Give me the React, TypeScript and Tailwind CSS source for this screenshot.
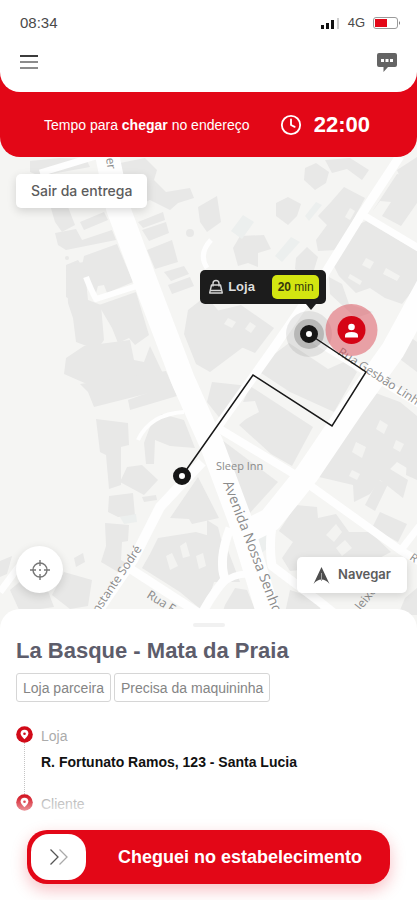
import { Clock } from "lucide-react";

const BUILDINGS = [
  "30,161 60,158 86,159 90,167 40,176 30,172",
  "120,163 145,158 157,170 154,180 166,192 190,188 194,198 178,203 170,210 150,200 135,206 126,190",
  "50,205 68,207 75,225 62,232 55,222",
  "80,222 104,212 108,220 84,230",
  "55,233 76,229 82,240 112,230 116,240 66,250 58,245",
  "138,222 163,212 165,220 143,228",
  "142,230 166,222 169,233 149,241",
  "147,250 172,240 178,262 155,269",
  "164,272 184,266 189,274 171,281",
  "168,285 190,277 194,286 172,294",
  "66,265 78,260 82,266 84,256 117,244 133,282 107,293 104,285 98,286 96,293 90,293 84,276 77,274 72,300 66,297",
  "66,265 84,262 88,300 101,305 104,340 97,350 76,342 73,318 68,303",
  "99,305 136,292 149,335 135,345 129,338 118,343 112,328 102,311",
  "66,358 84,346 130,340 134,360 144,362 150,346 166,380 96,388 64,374",
  "188,310 206,296 222,315 240,325 246,345 210,372 196,364 184,334",
  "198,207 217,196 221,222 207,232 200,222",
  "80,384 166,371 173,387 94,407 88,392",
  "128,400 172,384 177,396 130,410",
  "96,419 128,423 129,445 121,447 121,485 109,489 106,455 100,452",
  "162,414 184,420 195,448 170,446 155,440 154,464 146,464 144,443 151,424",
  "127,467 142,465 158,480 144,495 120,482",
  "109,496 133,493 135,516 118,517 108,512",
  "142,497 156,495 157,500 144,502",
  "105,523 129,525 128,541 122,542 121,560 126,563 118,572 101,562 106,546",
  "198,477 219,518 192,524 189,519 170,518",
  "158,538 196,532 224,540 240,582 214,582 204,612 180,592 142,568 150,554",
  "74,558 83,553 85,562 76,567",
  "64,572 92,580 88,606 70,609 52,595",
  "0,561 12,556 7,574 0,577",
  "10,590 28,575 46,586 54,607 20,612",
  "305,168 316,163 329,172 326,183 315,190 304,180",
  "276,203 288,197 301,204 297,216 288,225 276,216",
  "331,202 344,187 365,198 337,250 318,251 316,240 327,225 318,216",
  "233,248 240,236 264,235 271,249 258,253 258,267 248,263 238,266",
  "296,258 307,247 318,257 314,270 304,276 295,269",
  "325,160 350,158 369,170 362,180 347,169 332,173",
  "372,212 380,201 391,202 382,216 401,226 417,203 417,177 397,174",
  "397,170 417,157 417,193 405,190",
  "355,226 366,221 417,251 417,285 402,304 385,298 370,288 356,293 345,282 339,276 334,266 339,251",
  "329,277 342,284 349,304 373,312 356,318 330,294",
  "388,350 402,331 417,342 417,372",
  "212,312 241,305 274,328 255,353 234,344 222,334",
  "264,362 289,343 328,369 346,361 357,372 334,412 290,392 255,369",
  "212,382 249,386 238,405 222,421 207,402",
  "250,386 313,427 292,466 271,454 239,425 246,419 259,412 255,401 243,402",
  "222,440 278,482 249,514 241,507",
  "373,392 400,402 417,416 417,474 397,462 390,469 408,480 403,498 380,480 370,494 354,502 353,485 319,477 331,458",
  "378,480 388,484 375,511 365,505",
  "380,512 407,524 398,542 372,528",
  "407,458 417,462 417,480 406,475",
  "296,505 317,507 318,518 336,514 349,532 370,532 391,552 370,563 330,567 290,571 282,558 293,542 279,531",
  "207,520 218,527 222,543 219,560 207,569",
  "225,605 235,588 247,590 257,614 222,614",
  "290,590 320,600 320,615 285,613",
  "405,598 417,588 417,615 398,615",
];

const COURTYARDS = [
  "356,442 366,447 362,458 352,452",
  "380,420 388,425 384,434 376,429",
  "352,470 360,474 357,480 349,476",
  "396,440 404,444 400,452 393,448",
  "366,258 374,262 370,269 362,265",
  "386,268 400,276 397,281 383,274",
  "350,274 362,281 360,285 348,278",
  "350,208 355,211 350,220 345,217",
  "228,318 236,322 232,328 224,324",
  "250,322 256,326 251,333 245,329",
  "326,535 336,524 342,532 334,542",
  "345,540 352,548 342,556 336,548",
  "180,546 186,542 190,556 183,558",
  "196,556 203,553 206,566 199,569",
  "166,556 172,553 178,566 170,570",
];

const WATER = [
  "231,231 243,215 254,222 242,239",
  "275,256 291,237 300,242 282,262",
  "305,216 316,202 322,205 309,221",
  "120,517 136,514 137,522 124,524",
  "236,530 268,516 268,548 250,562",
];

const ROADS = [
  { d: "M102 130L118 208L146 283L183 380L212 445L240 520L272 625", w: 24 },
  { d: "M430 282L393 350L353 406L307 474L270 520L244 533", w: 24 },
  { d: "M202 462L160 507L133 560L92 620", w: 10 },
  { d: "M126 566L200 614", w: 9 },
  { d: "M400 156L360 217L324 275L273 349L204 446", w: 9 },
  { d: "M360 213L425 252", w: 7 },
  { d: "M218 428L294 474L400 550L425 565", w: 8 },
  { d: "M314 340L366 372L425 408", w: 7 },
  { d: "M140 285L96 299Q91 290 86 277", w: 6 },
  { d: "M138 440Q150 414 184 412", w: 4 },
  { d: "M0 592L20 565", w: 7 },
  { d: "M230 528Q218 560 225 579Q208 600 200 618", w: 9 },
  { d: "M222 584Q232 574 248 574", w: 7 },
  { d: "M278 500Q267 535 272 566L320 602L345 622", w: 9 },
  { d: "M428 515L401 550", w: 7 },
  { d: "M40 173L96 156", w: 7 },
  { d: "M207 268Q198 254 211 240", w: 5 },
];

function CityMap() {
  return (
    <svg
      className="absolute inset-0 h-full w-full"
      viewBox="0 137 417 492"
      preserveAspectRatio="xMidYMid slice"
      aria-hidden="true"
    >
      <rect y="137" width="417" height="492" fill="#f5f5f3" />
      <g fill="#e8e8e7">
        {BUILDINGS.map((points) => (
          <polygon key={points} points={points} />
        ))}
        <circle cx="190" cy="233" r="4" />
        <circle cx="67" cy="258" r="2" />
      </g>
      <g fill="#f3f3f1">
        {COURTYARDS.map((points) => (
          <polygon key={points} points={points} />
        ))}
      </g>
      <g fill="#ecefee">
        {WATER.map((points) => (
          <polygon key={points} points={points} />
        ))}
      </g>
      <g fill="none" stroke="#fefefe" strokeLinejoin="round">
        {ROADS.map((road) => (
          <path key={road.d} d={road.d} strokeWidth={road.w} />
        ))}
      </g>

      <g className="font-['Open_Sans',sans-serif]" fill="#8b8b8b" fontSize="12">
        <text x="216" y="470" fontSize="11">Sleep Inn</text>
        <text transform="translate(223 483) rotate(69)" fontSize="14">
          Avenida Nossa Senhora
        </text>
        <text transform="translate(90 626) rotate(-56)">Constante Sodré</text>
        <text transform="translate(146 597) rotate(32)">Rua F</text>
        <text transform="translate(337 354) rotate(33)">Rua Gesbão Linh</text>
        <text transform="translate(105 151) rotate(82)">Per</text>
        <text transform="translate(361 611) rotate(-52)">leixo</text>
        <text transform="translate(409 559) rotate(35)" fontSize="11">R</text>
      </g>

      <circle cx="309" cy="334" r="23" fill="#000" fillOpacity="0.08" />
      <circle cx="309" cy="334" r="15" fill="#000" fillOpacity="0.18" />
      <path
        d="M182 476L253 375L332 426L366 372L309 334"
        fill="none"
        stroke="#181818"
        strokeWidth="1.5"
      />
      <circle cx="309" cy="334" r="6" fill="#fff" stroke="#161616" strokeWidth="6" />
      <circle cx="182" cy="476" r="6" fill="#fff" stroke="#161616" strokeWidth="6" />
      <circle cx="351.500" cy="330" r="26" fill="#dc4b58" fillOpacity="0.5" />
      <circle cx="351.500" cy="330" r="14" fill="#d50415" />
      <circle cx="351.500" cy="327" r="3.300" fill="#fff" />
      <path d="M345 337.500v-2q0-3.500 6.500-3.500t6.500 3.500v2z" fill="#fff" />
    </svg>
  );
}

function StatusBar() {
  return (
    <div className="flex items-center justify-between pr-4 pl-5 leading-4 text-[#4a4a4a]">
      <span className="text-[15px]">08:34</span>
      <div className="flex items-center gap-2">
        <svg width="20" height="12" viewBox="0 0 20 12" aria-label="Sinal">
          <path d="M1 8h3v4H1zM6 6h3v6H6zM11 3h3v9h-3z" fill="#111" />
          <path d="M17 1h2v11h-2z" fill="#cfcfcf" />
        </svg>
        <span className="text-[13px]">4G</span>
        <svg width="28" height="12" viewBox="0 0 28 12" aria-label="Bateria">
          <rect x="0.500" y="0.500" width="24" height="11" rx="2.500" fill="#fff" stroke="#9a9a9a" />
          <path d="M2 2h12v8H2z" fill="#e30717" />
          <path d="M26 4q2 2 0 4z" fill="#777" />
        </svg>
      </div>
    </div>
  );
}

function Header() {
  return (
    <header className="relative z-10 rounded-b-[20px] bg-[#e30717]">
      <div className="rounded-b-[20px] bg-white pt-[15px] pb-4">
        <StatusBar />
        <div className="mt-[17px] flex items-center justify-between px-4">
          <button type="button" aria-label="Menu" className="p-1">
            <svg width="18" height="18" viewBox="0 0 18 18" fill="none" strokeWidth="2">
              <path d="M0 3h18" stroke="#3c3c3c" />
              <path d="M0 9h18M0 15h18" stroke="#8c8c8c" />
            </svg>
          </button>
          <button type="button" aria-label="Mensagens" className="p-1">
            <svg width="20" height="20" viewBox="0 0 20 20">
              <path
                d="M2 1h16q2 0 2 2v10q0 2-2 2h-7l-4.500 5V15H2q-2 0-2-2V3q0-2 2-2z"
                fill="#646464"
              />
              <path d="M4 7h3v3H4zM8.500 7h3v3h-3zM13 7h3v3h-3z" fill="#fff" />
            </svg>
          </button>
        </div>
      </div>
      <div className="flex h-[65px] items-center justify-between pr-[47px] pl-11 text-white">
        <p className="text-sm">
          Tempo para <strong>chegar</strong> no endereço
        </p>
        <div className="flex items-center gap-3">
          <Clock size={22} strokeWidth={2} />
          <span className="text-[22px] leading-6 font-bold">22:00</span>
        </div>
      </div>
    </header>
  );
}

function StoreTooltip() {
  return (
    <div className="absolute top-[27%] left-[48%] flex h-[34px] w-[126px] items-center rounded-[5px] bg-[#1c1c1c] pr-[7px] pl-2 text-white">
      <svg width="16" height="16" viewBox="0 0 16 16" fill="none" stroke="#d6d6d6" strokeWidth="1.400">
        <path d="M3.500 6h9l1.800 8H1.700z" strokeLinejoin="round" />
        <path d="M5 7.500V4.500a3 3 0 0 1 6 0v3M3 11.500h10" />
      </svg>
      <span className="ml-1 text-[13px] font-bold text-[#dedede]">Loja</span>
      <span className="ml-auto flex h-6 w-[47px] items-center justify-center rounded-[5px] bg-[#d3e511] text-xs whitespace-pre text-[#35390d]">
        <b>20</b> min
      </span>
      <svg className="absolute top-full right-2.5" width="10" height="6" viewBox="0 0 10 6">
        <path d="M0 0h10L5 6z" fill="#1c1c1c" />
      </svg>
    </div>
  );
}

function MapView() {
  return (
    <section className="relative -my-5 min-h-[492px] flex-1 overflow-hidden">
      <CityMap />
      <StoreTooltip />
      <button
        type="button"
        className="absolute top-[37px] left-4 h-[34px] rounded-[5px] bg-white px-[15px] font-['Inter',sans-serif] text-sm font-medium text-[#5c5c5c] shadow-[0_3px_10px_rgba(0,0,0,0.14)]"
      >
        Sair da entrega
      </button>
      <button
        type="button"
        aria-label="Minha localização"
        className="absolute bottom-9 left-4 flex size-[47px] items-center justify-center rounded-full bg-white shadow-[0_3px_10px_rgba(0,0,0,0.14)]"
      >
        <svg width="22" height="22" viewBox="0 0 22 22" fill="none" stroke="#777" strokeWidth="1.400">
          <circle cx="11" cy="11" r="7" />
          <path d="M11 1v6M11 15v6M1 11h6M15 11h6" />
          <circle cx="11" cy="11" r="1" fill="#777" stroke="none" />
        </svg>
      </button>
      <button
        type="button"
        className="absolute right-2.5 bottom-9 flex h-9 items-center gap-2 rounded-[5px] bg-white px-4 font-['Inter',sans-serif] text-[13px] font-semibold text-[#5c5c5c] shadow-[0_3px_10px_rgba(0,0,0,0.14)]"
      >
        <svg width="17" height="17" viewBox="0 0 17 17">
          <path d="M8.500 0L16.500 17Q13 12.500 8.500 12.500T0.500 17z" fill="#4d4d4d" />
          <path d="M8.500 6v8" stroke="#a3a3a3" strokeWidth="1" />
        </svg>
        Navegar
      </button>
    </section>
  );
}

function StopPin() {
  return (
    <svg className="shrink-0" width="17" height="17" viewBox="0 0 17 17">
      <circle cx="8.500" cy="8.500" r="8.300" fill="#d10a18" />
      <path d="M8.500 13.300Q4.600 9.500 4.600 7.600a3.900 3.900 0 0 1 7.800 0Q12.400 9.500 8.500 13.300z" fill="#fff" />
      <circle cx="8.500" cy="7.800" r="1.300" fill="#d10a18" />
    </svg>
  );
}

function DeliverySheet() {
  return (
    <section className="relative z-10 rounded-t-[20px] bg-white px-4 pt-3.5 pb-[18px]">
      <div className="mx-auto h-1 w-8 rounded-full bg-[#f1f1f1]" />
      <h1 className="mt-2.5 text-[22px] leading-7 font-bold text-[#5d5d6b]">
        La Basque - Mata da Praia
      </h1>
      <ul className="mt-2 flex gap-[3px] text-sm text-[#858585]">
        <li className="flex h-[29px] items-center rounded-[3px] border border-[#d6d6d6] px-1.5">
          Loja parceira
        </li>
        <li className="flex h-[29px] items-center rounded-[3px] border border-[#d6d6d6] px-1.5">
          Precisa da maquininha
        </li>
      </ul>

      <ol className="mt-6 text-sm leading-4 text-[#ababab]">
        <li className="flex h-[68px] gap-2">
          <div className="flex flex-col items-center">
            <StopPin />
            <div className="flex-1 border-l border-dotted border-[#c4c4c4]" />
          </div>
          <div className="pt-0.5">
            <p>Loja</p>
            <p className="mt-2.5 font-bold text-[#111]">
              R. Fortunato Ramos, 123 - Santa Lucia
            </p>
          </div>
        </li>
        <li className="relative flex gap-2">
          <StopPin />
          <p className="pt-0.5">Cliente</p>
          <div className="absolute inset-0 bg-linear-to-b from-white/0 to-white/60" />
        </li>
      </ol>

      <button
        type="button"
        className="mt-[18px] ml-[11px] flex h-[54px] w-[calc(100%-22px)] items-center rounded-[20px] bg-[#e30717] p-1 text-white shadow-[0_6px_16px_rgba(227,7,23,0.25)]"
      >
        <span className="flex h-[46px] w-[55px] shrink-0 items-center justify-center rounded-[18px] bg-white">
          <svg width="20" height="18" viewBox="0 0 20 18" fill="none" strokeWidth="1.300">
            <path d="M1.500 1.500L9 9l-7.500 7.500" stroke="#555" />
            <path d="M10.500 1.500L18 9l-7.500 7.500" stroke="#aaa" />
          </svg>
        </span>
        <span className="flex-1 pl-2 text-center text-lg font-bold">
          Cheguei no estabelecimento
        </span>
      </button>
    </section>
  );
}

export default function App() {
  return (
    <main className="flex min-h-screen flex-col bg-white font-['Liberation_Sans',Arial,sans-serif]">
      <Header />
      <MapView />
      <DeliverySheet />
    </main>
  );
}
